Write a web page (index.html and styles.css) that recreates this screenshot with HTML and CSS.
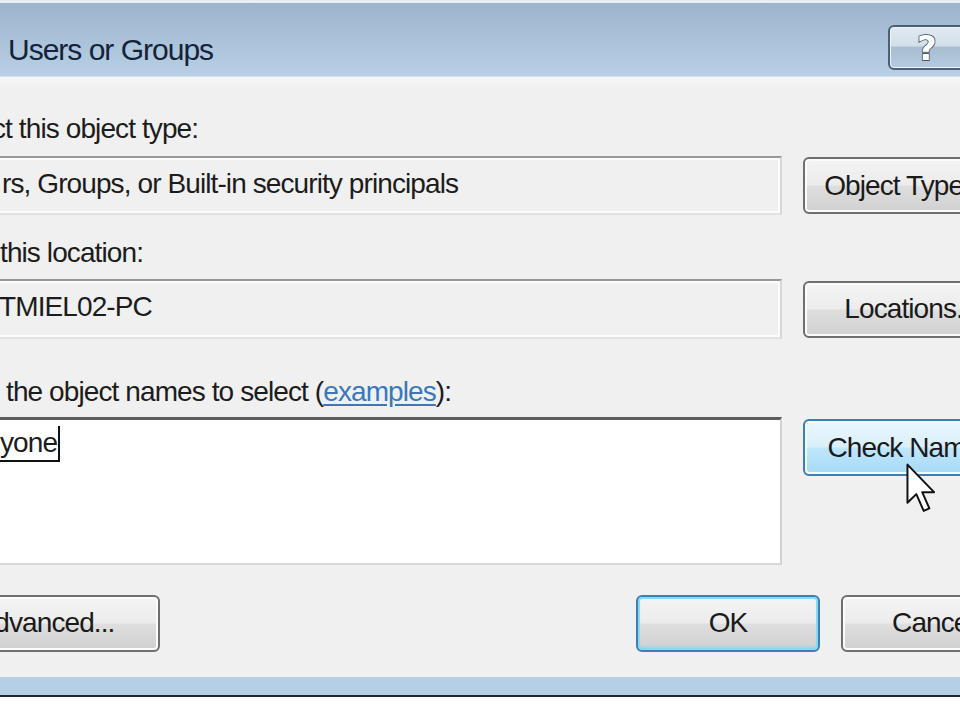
FILE: index.html
```html
<!DOCTYPE html>
<html lang="en">
<head>
<meta charset="utf-8">
<title>Select Users or Groups</title>
<link rel="stylesheet" href="styles.css">
</head>
<body>
<div class="screen">
  <div class="topstrip"></div>
  <header class="titlebar">
    <h1 class="title">Users or Groups</h1>
    <button class="help" type="button"><span class="help-glyph">?</span></button>
  </header>
  <main class="dialog">
    <div class="label lbl1"><span class="cut-c">ct this object type:</span></div>
    <div class="row row1">
      <div class="field ro pad1"><span>rs, Groups, or Built-in security principals</span></div>
      <button class="btn" type="button">Object Types...</button>
    </div>
    <div class="label lbl2">this location:</div>
    <div class="row row2">
      <div class="field ro pad2"><span class="cut-t">TMIEL02-PC</span></div>
      <button class="btn" type="button">Locations...</button>
    </div>
    <div class="label lbl3">the object names to select (<a class="link">examples</a>):</div>
    <div class="row row3">
      <div class="field edit"><span class="resolved">yone</span></div>
      <div class="btnwrap">
        <button class="btn hover" type="button">Check Names</button>
        <svg class="cursor" viewBox="0 0 13 21" width="32" height="52" aria-hidden="true">
          <path d="M1 1 L1 16.5 L4.6 13 L7.6 19.8 L9.9 18.8 L7 12.2 L11.8 12.2 Z" fill="#fff" stroke="#111" stroke-width="0.8" stroke-linejoin="round"/>
        </svg>
      </div>
    </div>
    <div class="footer">
      <button class="btn adv" type="button">Advanced...</button>
      <button class="btn default ok" type="button">OK</button>
      <button class="btn cancel" type="button">Cancel</button>
    </div>
  </main>
  <div class="bottombar"></div>
  <div class="bottomline"></div>
  <div class="bottomwhite"></div>
</div>
</body>
</html>
```
FILE: styles.css
```css
html, body {
  margin: 0;
  padding: 0;
  background: #ffffff;
}

.screen {
  width: 960px;
  height: 720px;
  overflow: hidden;
  display: flex;
  flex-direction: column;
  background: #f0f0f0;
  font-family: "Liberation Sans", Arial, sans-serif;
  letter-spacing: -0.9px;
  color: #1c1c1c;
}

.topstrip {
  height: 3px;
  flex-shrink: 0;
  background: #e6edf3;
}

.titlebar {
  height: 74px;
  flex-shrink: 0;
  box-sizing: border-box;
  display: flex;
  justify-content: space-between;
  align-items: flex-start;
  padding: 22px 0 0 8px;
  background: linear-gradient(180deg, #9cb4cc 0%, #a9c1d8 45%, #b8d0e6 100%);
  border-bottom: 1px solid #d6e2ed;
}

.title {
  margin: 5px 0 0 0;
  font-size: 30px;
  letter-spacing: -1px;
  line-height: 40px;
  font-weight: normal;
  color: #14233a;
}

.help {
  flex-shrink: 0;
  width: 100px;
  height: 45px;
  margin: 0 -28px 0 0;
  padding: 0;
  box-sizing: border-box;
  border: 2px solid #4d5f74;
  border-radius: 6px;
  background: linear-gradient(180deg, #e2eaf2 0%, #d2dee9 46%, #a8bdd2 50%, #b6cbe0 100%);
  box-shadow: inset 0 0 0 1px #eef3f8;
  display: flex;
  align-items: center;
  justify-content: flex-start;
}

.help-glyph {
  margin-left: 27px;
  font-family: "DejaVu Sans", "Liberation Sans", sans-serif;
  font-weight: bold;
  font-size: 34px;
  line-height: 38px;
  letter-spacing: 0;
  color: #ffffff;
  -webkit-text-stroke: 1.5px #34404f;
  paint-order: stroke fill;
}

.dialog {
  flex: 1;
  display: flex;
  flex-direction: column;
  padding-top: 34px;
  background: linear-gradient(180deg, #f6f6f6 0px, #f0f0f0 12px);
}

.label {
  height: 36px;
  font-size: 28px;
  line-height: 36px;
  white-space: nowrap;
}

.lbl2 { margin-top: 20px; }
.lbl3 { margin-top: 35px; padding-left: 6px; }

.cut-c { margin-left: -8px; }
.cut-t { margin-left: -3px; }

.link {
  color: #3a78bb;
  text-decoration: underline;
  text-underline-offset: 3px;
}

.row {
  display: flex;
  align-items: center;
  gap: 21px;
  margin-left: -20px;
}

.row1 { margin-top: 9px; height: 59px; }
.row2 { margin-top: 8px; height: 60px; }
.row3 { margin-top: 7px; height: 148px; align-items: flex-start; }

.field {
  flex-shrink: 0;
  width: 802px;
  height: 100%;
  box-sizing: border-box;
  font-size: 28px;
  line-height: 36px;
  white-space: nowrap;
  padding-left: 20px;
}

.ro {
  background: #f0f0f0;
  border: 2px solid;
  border-color: #979797 #d7d7d7 #e2e2e2 #d7d7d7;
  box-shadow: inset 0 0 0 2px #fbfbfb;
}

.pad1 { padding-top: 8px; }
.pad2 { padding-top: 8px; }

.edit {
  background: #ffffff;
  border: 2px solid;
  border-top: 3px solid #5d5d5d;
  border-color: #5d5d5d #d2d2d2 #d8d8d8 #d2d2d2;
}

.resolved {
  display: inline-block;
  margin-left: -2px;
  padding-right: 1px;
  line-height: 34px;
  height: 36px;
  box-sizing: border-box;
  border-right: 2px solid #111;
  border-bottom: 2px solid #111;
  margin-top: 6px;
}

.btn {
  flex-shrink: 0;
  width: 215px;
  height: 57px;
  box-sizing: border-box;
  border: 2px solid #6f6f6f;
  border-radius: 6px;
  background: linear-gradient(180deg, #f4f4f4 0%, #ececec 48%, #dedede 52%, #d0d0d0 100%);
  box-shadow: inset 0 0 0 2px #fbfbfb;
  font-family: "Liberation Sans", Arial, sans-serif;
  font-size: 28px;
  letter-spacing: -0.9px;
  line-height: 36px;
  color: #1a1a1a;
  padding: 0;
  text-align: center;
  white-space: nowrap;
}

.btnwrap {
  position: relative;
  flex-shrink: 0;
  margin-top: 2px;
}

.hover {
  border-color: #3c7fb1;
  background: linear-gradient(180deg, #eaf6fd 0%, #d9f0fc 48%, #bee6fd 52%, #a7d9f5 100%);
  box-shadow: inset 0 0 0 2px #f4fbff;
}

.cursor {
  position: absolute;
  left: 102px;
  top: 43px;
}

.footer {
  display: flex;
  align-items: center;
  margin-top: 30px;
  height: 56px;
}

.adv { margin-left: -55px; padding-right: 14px; }
.ok { margin-left: 476px; width: 184px; }
.cancel { margin-left: 21px; width: 184px; }

.default {
  border-color: #3c7fb1;
  box-shadow: inset 0 0 0 2px #8ad9f1, inset 0 -3px 3px #8ad9f1;
}

.bottombar {
  height: 18px;
  flex-shrink: 0;
  background: #b5cfe7;
}

.bottomline {
  height: 2px;
  flex-shrink: 0;
  background: #1d2631;
}

.bottomwhite {
  height: 23px;
  flex-shrink: 0;
  background: #ffffff;
}
```
